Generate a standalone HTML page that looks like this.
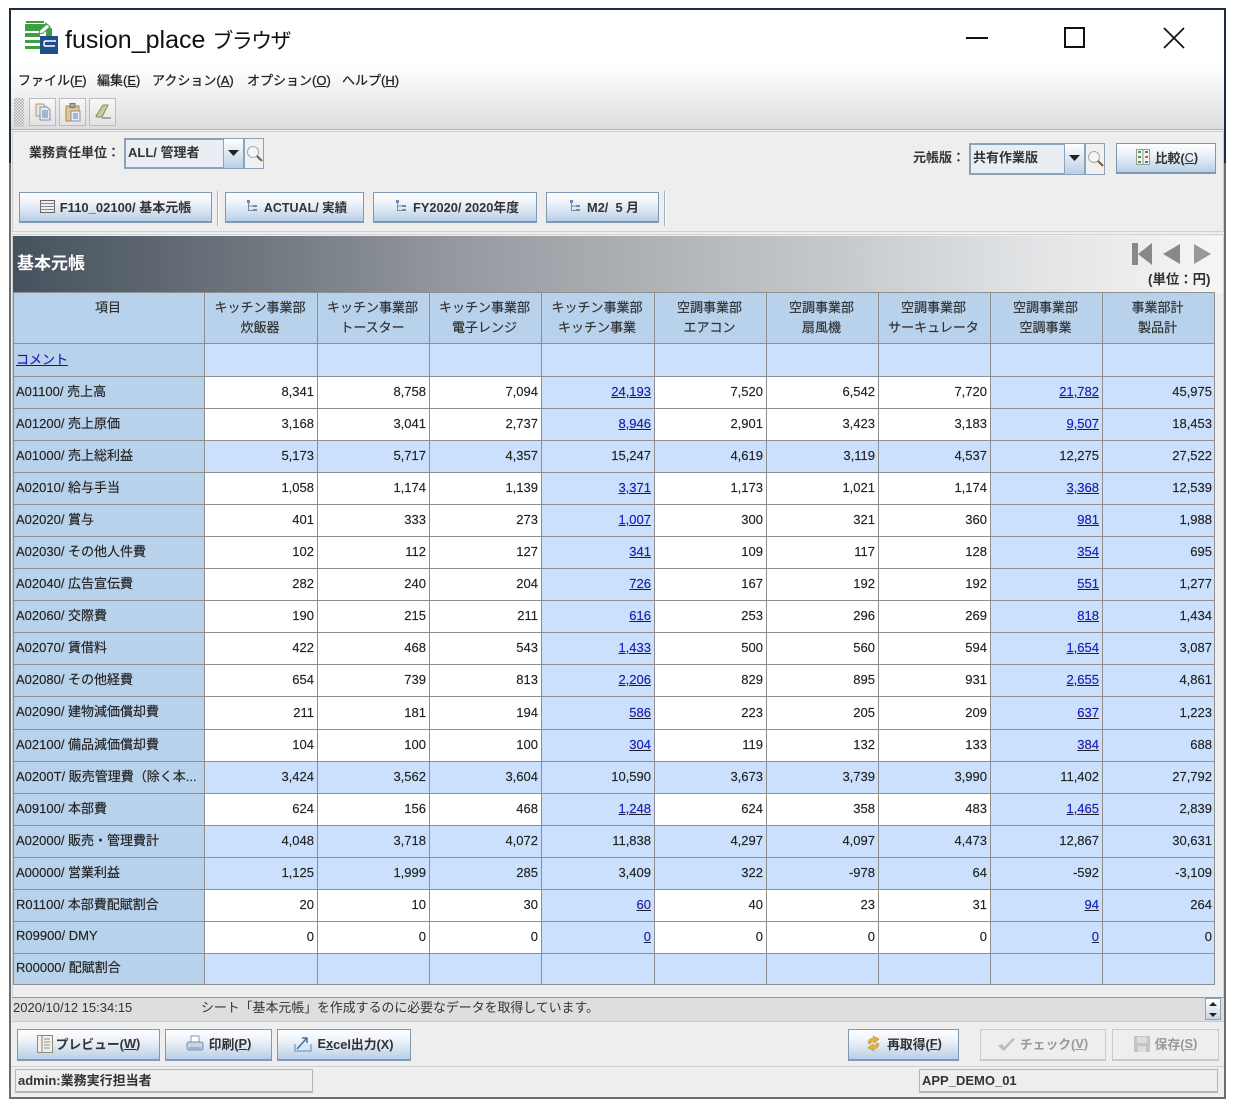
<!DOCTYPE html>
<html lang="ja"><head><meta charset="utf-8"><title>fusion_place ブラウザ</title>
<style>
*{box-sizing:border-box}
html,body{margin:0;padding:0;background:#fff}
body{width:1238px;height:1116px;position:relative;overflow:hidden;font-family:"Liberation Sans","Noto Sans CJK JP",sans-serif;font-size:13px;color:#222}
.a{position:absolute;white-space:nowrap}
.btn{position:absolute;border:1px solid #7f99b3;border-width:1px 1px 2px 1px;background:linear-gradient(#fdfeff 0,#eef3f9 35%,#b9cfe6 100%);display:flex;align-items:center;justify-content:center;font-weight:bold;color:#333;white-space:nowrap;font-size:12.8px;padding-bottom:2px}
.btn svg{margin-right:5px;flex:none}
.dis{border:2px solid #c9c9c9;border-width:1px 1px 2px 1px;background:#eee;color:#999}
.tb{position:absolute;top:98px;width:27px;height:28px;border:1px solid #bcbcbc;background:linear-gradient(#f8f8f8,#e2e2e2);display:flex;align-items:center;justify-content:center}
.sep{position:absolute;width:2px;background:#9db3cc;border-right:1px solid #fff}
.m{position:absolute;top:70px;font-size:13px;color:#222;white-space:nowrap;-webkit-text-stroke:.25px #222}
table{position:absolute;left:13px;top:292px;border-collapse:collapse;table-layout:fixed;width:1202px;-webkit-text-stroke:.15px #222}
td,th{border:1px solid #8e8e8e;font-weight:normal;font-size:13px;overflow:hidden;white-space:nowrap}
td{background:#cae0fd;text-align:right;color:#222;padding:0 3px 2px 2px}
td:last-child{padding-right:2px}
td.w{background:#fff}
th{background:#b8d2ec;text-align:left;padding:0 2px 5px 2px}
tr.h th{text-align:center;vertical-align:top;line-height:20px;padding:5px 3px 0 1px;color:#333}
u{color:#1a1ae0}
.lab{font-weight:bold;color:#333}
</style></head><body>

<!-- window frame -->
<div class="a" style="left:9px;top:8px;width:1217px;height:1091px;background:#eee;border:2px solid #6d6d6d;border-top-color:#1c2c3c"></div>
<div class="a" style="left:9px;top:8px;width:2px;height:155px;background:#1c2c3c"></div>
<div class="a" style="left:1224px;top:8px;width:2px;height:155px;background:#1c2c3c"></div>
<div class="a" style="left:11px;top:10px;width:1213px;height:120px;background:linear-gradient(#fff 0,#fff 48%,#dcdcdc 100%)"></div>

<!-- app icon -->
<svg class="a" style="left:25px;top:21px" width="34" height="34" viewBox="0 0 34 34">
<path d="M0 1H20L27 8V15H15V28H0Z" fill="#fff"/>
<path d="M1 1H19" stroke="#3f9d43" stroke-width="2"/><rect x="0" y="3" width="20" height="7" fill="#3f9d43"/>
<rect x="0" y="12" width="15" height="4" fill="#3f9d43"/><rect x="0" y="19" width="15" height="3" fill="#3f9d43"/><rect x="0" y="25" width="15" height="3" fill="#3f9d43"/>
<path d="M20 1L27 8V15H21V10L20 8Z" fill="#3f9d43"/><path d="M15 9L22 3L25 6L18 12L14 13Z" fill="#fff" stroke="#3f9d43"/>
<rect x="15" y="15" width="18" height="18" fill="#1f4e8c"/>
<path d="M19 25V22Q19 20 21 20H31M19 25H30" fill="none" stroke="#fff" stroke-width="1.4"/>
</svg>
<div class="a" style="left:65px;top:24px;font-size:25px;line-height:32px;color:#111">fusion_place <span style="font-size:21px;letter-spacing:-1.6px">ブラウザ</span></div>

<!-- window controls -->
<div class="a" style="left:966px;top:37px;width:22px;height:2px;background:#111"></div>
<div class="a" style="left:1064px;top:27px;width:21px;height:21px;border:2px solid #111"></div>
<svg class="a" style="left:1163px;top:27px" width="22" height="22"><path d="M1 1L21 21M21 1L1 21" stroke="#111" stroke-width="1.7"/></svg>

<!-- menu -->
<div class="m" style="left:18px">ファイル(<u style="color:inherit">F</u>)</div>
<div class="m" style="left:97px">編集(<u style="color:inherit">E</u>)</div>
<div class="m" style="left:152px">アクション(<u style="color:inherit">A</u>)</div>
<div class="m" style="left:247px">オプション(<u style="color:inherit">O</u>)</div>
<div class="m" style="left:342px">ヘルプ(<u style="color:inherit">H</u>)</div>

<!-- toolbar -->
<div class="a" style="left:14px;top:98px;width:10px;height:29px;background-image:repeating-conic-gradient(#aaa 0 25%,#eee 0 50%);background-size:3px 3px"></div>
<div class="tb" style="left:29px"><svg width="20" height="20" viewBox="0 0 20 20"><path d="M3 2H10L12 4V14H3Z" fill="#eee8d8" stroke="#a9987a"/><path d="M7 5H14L17 8V18H7Z" fill="#e4ecf6" stroke="#7e95b3"/><path d="M9 9H15M9 11H15M9 13H15M9 15H15" stroke="#5b82b0"/></svg></div>
<div class="tb" style="left:59px"><svg width="20" height="20" viewBox="0 0 20 20"><rect x="3" y="4" width="13" height="15" fill="#e7c48c" stroke="#a98a50"/><rect x="7" y="1.500" width="5" height="4" fill="#aaa" stroke="#777"/><path d="M8 9H17V19H8Z" fill="#e8eef8" stroke="#7e95b3"/><path d="M10 12H15M10 14H15M10 16H15" stroke="#5b82b0"/></svg></div>
<div class="tb" style="left:89px"><svg width="20" height="20" viewBox="0 0 20 20"><path d="M3 14L10 3H15L9 15H4Z" fill="#cfc9a0" stroke="#8b8a63"/><path d="M9 16H18" stroke="#666"/></svg></div>
<div class="a" style="left:11px;top:129px;width:1213px;height:1px;background:#b5b5b5"></div>

<!-- filter panel -->
<div class="a" style="left:12px;top:131px;width:1212px;height:101px;background:#eee;border:1px solid #cfcfcf"></div>
<div class="a lab" style="left:29px;top:142px">業務責任単位：</div>
<div class="a" style="left:124px;top:138px;width:100px;height:31px;background:#e9eef4;border:2px solid #8ca2b8;font-weight:bold;color:#333;padding:2px 2px;border-right-width:1px">ALL/ 管理者</div>
<div class="a" style="left:223px;top:138px;width:21px;height:31px;background:linear-gradient(#fff,#b9cfe6);border:1px solid #8ca2b8"></div>
<svg class="a" style="left:228px;top:150px" width="11" height="6"><path d="M0 0H11L5.500 6Z" fill="#222"/></svg>
<div class="a" style="left:244px;top:138px;width:20px;height:31px;background:#f1f1f1;border:1px solid #8ca2b8"></div>
<svg class="a" style="left:246px;top:145px" width="17" height="17"><circle cx="7" cy="7" r="5.500" fill="#f3f6fa" stroke="#a8a8a8"/><path d="M11 11L16 16" stroke="#7a5a40" stroke-width="2"/></svg>

<div class="a lab" style="left:913px;top:147px">元帳版：</div>
<div class="a" style="left:969px;top:143px;width:96px;height:32px;background:#e9eef4;border:2px solid #8ca2b8;font-weight:bold;color:#333;padding:2px 2px;border-right-width:1px">共有作業版</div>
<div class="a" style="left:1064px;top:143px;width:21px;height:32px;background:linear-gradient(#fff,#b9cfe6);border:1px solid #8ca2b8"></div>
<svg class="a" style="left:1069px;top:155px" width="11" height="6"><path d="M0 0H11L5.500 6Z" fill="#222"/></svg>
<div class="a" style="left:1085px;top:143px;width:20px;height:32px;background:#f1f1f1;border:1px solid #8ca2b8"></div>
<svg class="a" style="left:1087px;top:150px" width="17" height="17"><circle cx="7" cy="7" r="5.500" fill="#f3f6fa" stroke="#a8a8a8"/><path d="M11 11L16 16" stroke="#7a5a40" stroke-width="2"/></svg>
<div class="btn" style="left:1116px;top:143px;width:100px;height:31px;padding-left:2px"><svg width="14" height="16" viewBox="0 0 14 16"><rect x=".5" y=".5" width="13" height="15" fill="#f4f4e8" stroke="#999"/><path d="M7 0V16" stroke="#999"/><path d="M2 3H5M2 8H5M2 13H5" stroke="#3a9a5a" stroke-width="2"/><path d="M9 3H12M9 13H12" stroke="#3f77c0" stroke-width="2"/><path d="M9 8H12" stroke="#d9534f" stroke-width="2"/></svg>比較(<u style="color:inherit;font-weight:normal">C</u>)</div>

<div class="btn" style="left:19px;top:192px;width:193px;height:31px;font-size:13px"><svg width="15" height="13" viewBox="0 0 15 13"><rect x=".5" y=".5" width="14" height="12" fill="#eee" stroke="#666"/><path d="M0 3.500H15M0 6.500H15M0 9.500H15" stroke="#888"/></svg>F110_02100/ 基本元帳</div>
<div class="sep" style="left:217px;top:191px;height:35px"></div>
<div class="btn" style="left:225px;top:192px;width:139px;height:31px;font-size:12.5px;padding-left:4px"><svg style="margin-right:6px" width="12" height="12" viewBox="0 0 12 12"><path d="M2.500 2V10.500H7M2.500 6H7" fill="none" stroke="#6c8bb0"/><rect x="1" y="0" width="3" height="3" fill="#6c8bb0"/><rect x="7" y="5" width="4" height="2" fill="#6c8bb0"/><rect x="7" y="9" width="4" height="2" fill="#6c8bb0"/></svg>ACTUAL/ 実績</div>
<div class="btn" style="left:373px;top:192px;width:164px;height:31px;padding-left:4px"><svg style="margin-right:6px" width="12" height="12" viewBox="0 0 12 12"><path d="M2.500 2V10.500H7M2.500 6H7" fill="none" stroke="#6c8bb0"/><rect x="1" y="0" width="3" height="3" fill="#6c8bb0"/><rect x="7" y="5" width="4" height="2" fill="#6c8bb0"/><rect x="7" y="9" width="4" height="2" fill="#6c8bb0"/></svg>FY2020/ 2020年度</div>
<div class="btn" style="left:546px;top:192px;width:113px;height:31px;padding-left:3px"><svg style="margin-right:6px" width="12" height="12" viewBox="0 0 12 12"><path d="M2.500 2V10.500H7M2.500 6H7" fill="none" stroke="#6c8bb0"/><rect x="1" y="0" width="3" height="3" fill="#6c8bb0"/><rect x="7" y="5" width="4" height="2" fill="#6c8bb0"/><rect x="7" y="9" width="4" height="2" fill="#6c8bb0"/></svg>M2/ &nbsp;5 月</div>
<div class="sep" style="left:664px;top:191px;height:35px"></div>

<!-- sheet header -->
<div class="a" style="left:12px;top:234px;width:1212px;height:764px;background:#eee;border:1px solid #d2d2d2"></div>
<div class="a" style="left:13px;top:236px;width:1210px;height:57px;background:linear-gradient(90deg,#46525e 0,#6f767e 20%,#989ca2 38%,#c6c9cc 68%,#e2e4e6 85%,#f6f6f6 100%)"></div>
<div class="a" style="left:17px;top:252px;font-size:17px;font-weight:bold;color:#fff;line-height:24px">基本元帳</div>
<svg class="a" style="left:1131px;top:242px" width="82" height="24"><path d="M1 1H7V23H1ZM21 1V23L7 12Z" fill="#888"/><path d="M49 2V22L32 12Z" fill="#888"/><path d="M63 2V22L80 12Z" fill="#999"/></svg>
<div class="a lab" style="left:1148px;top:268px;font-size:13.4px">(単位：円)</div>

<!-- table -->
<table>
<colgroup><col style="width:191px"><col style="width:113px"><col style="width:112px"><col style="width:112px"><col style="width:113px"><col style="width:112px"><col style="width:112px"><col style="width:112px"><col style="width:112px"><col style="width:112px"></colgroup>
<tr class="h" style="height:51px"><th>項目</th><th>キッチン事業部<br>炊飯器</th><th>キッチン事業部<br>トースター</th><th>キッチン事業部<br>電子レンジ</th><th>キッチン事業部<br>キッチン事業</th><th>空調事業部<br>エアコン</th><th>空調事業部<br>扇風機</th><th>空調事業部<br>サーキュレータ</th><th>空調事業部<br>空調事業</th><th>事業部計<br>製品計</th></tr>
<tr style="height:33px"><th style="padding-bottom:3px"><u>コメント</u></th><td></td><td></td><td></td><td></td><td></td><td></td><td></td><td></td><td></td></tr>
<tr style="height:32px"><th>A01100/ 売上高</th><td class="w">8,341</td><td class="w">8,758</td><td class="w">7,094</td><td><u>24,193</u></td><td class="w">7,520</td><td class="w">6,542</td><td class="w">7,720</td><td><u>21,782</u></td><td>45,975</td></tr>
<tr style="height:32px"><th>A01200/ 売上原価</th><td class="w">3,168</td><td class="w">3,041</td><td class="w">2,737</td><td><u>8,946</u></td><td class="w">2,901</td><td class="w">3,423</td><td class="w">3,183</td><td><u>9,507</u></td><td>18,453</td></tr>
<tr style="height:32px"><th>A01000/ 売上総利益</th><td>5,173</td><td>5,717</td><td>4,357</td><td>15,247</td><td>4,619</td><td>3,119</td><td>4,537</td><td>12,275</td><td>27,522</td></tr>
<tr style="height:32px"><th>A02010/ 給与手当</th><td class="w">1,058</td><td class="w">1,174</td><td class="w">1,139</td><td><u>3,371</u></td><td class="w">1,173</td><td class="w">1,021</td><td class="w">1,174</td><td><u>3,368</u></td><td>12,539</td></tr>
<tr style="height:32px"><th>A02020/ 賞与</th><td class="w">401</td><td class="w">333</td><td class="w">273</td><td><u>1,007</u></td><td class="w">300</td><td class="w">321</td><td class="w">360</td><td><u>981</u></td><td>1,988</td></tr>
<tr style="height:32px"><th>A02030/ その他人件費</th><td class="w">102</td><td class="w">112</td><td class="w">127</td><td><u>341</u></td><td class="w">109</td><td class="w">117</td><td class="w">128</td><td><u>354</u></td><td>695</td></tr>
<tr style="height:32px"><th>A02040/ 広告宣伝費</th><td class="w">282</td><td class="w">240</td><td class="w">204</td><td><u>726</u></td><td class="w">167</td><td class="w">192</td><td class="w">192</td><td><u>551</u></td><td>1,277</td></tr>
<tr style="height:32px"><th>A02060/ 交際費</th><td class="w">190</td><td class="w">215</td><td class="w">211</td><td><u>616</u></td><td class="w">253</td><td class="w">296</td><td class="w">269</td><td><u>818</u></td><td>1,434</td></tr>
<tr style="height:32px"><th>A02070/ 賃借料</th><td class="w">422</td><td class="w">468</td><td class="w">543</td><td><u>1,433</u></td><td class="w">500</td><td class="w">560</td><td class="w">594</td><td><u>1,654</u></td><td>3,087</td></tr>
<tr style="height:32px"><th>A02080/ その他経費</th><td class="w">654</td><td class="w">739</td><td class="w">813</td><td><u>2,206</u></td><td class="w">829</td><td class="w">895</td><td class="w">931</td><td><u>2,655</u></td><td>4,861</td></tr>
<tr style="height:33px"><th>A02090/ 建物減価償却費</th><td class="w">211</td><td class="w">181</td><td class="w">194</td><td><u>586</u></td><td class="w">223</td><td class="w">205</td><td class="w">209</td><td><u>637</u></td><td>1,223</td></tr>
<tr style="height:32px"><th>A02100/ 備品減価償却費</th><td class="w">104</td><td class="w">100</td><td class="w">100</td><td><u>304</u></td><td class="w">119</td><td class="w">132</td><td class="w">133</td><td><u>384</u></td><td>688</td></tr>
<tr style="height:32px"><th>A0200T/ 販売管理費（除く本...</th><td>3,424</td><td>3,562</td><td>3,604</td><td>10,590</td><td>3,673</td><td>3,739</td><td>3,990</td><td>11,402</td><td>27,792</td></tr>
<tr style="height:32px"><th>A09100/ 本部費</th><td class="w">624</td><td class="w">156</td><td class="w">468</td><td><u>1,248</u></td><td class="w">624</td><td class="w">358</td><td class="w">483</td><td><u>1,465</u></td><td>2,839</td></tr>
<tr style="height:32px"><th>A02000/ 販売・管理費計</th><td>4,048</td><td>3,718</td><td>4,072</td><td>11,838</td><td>4,297</td><td>4,097</td><td>4,473</td><td>12,867</td><td>30,631</td></tr>
<tr style="height:32px"><th>A00000/ 営業利益</th><td>1,125</td><td>1,999</td><td>285</td><td>3,409</td><td>322</td><td>-978</td><td>64</td><td>-592</td><td>-3,109</td></tr>
<tr style="height:32px"><th>R01100/ 本部費配賦割合</th><td class="w">20</td><td class="w">10</td><td class="w">30</td><td><u>60</u></td><td class="w">40</td><td class="w">23</td><td class="w">31</td><td><u>94</u></td><td>264</td></tr>
<tr style="height:32px"><th>R09900/ DMY</th><td class="w">0</td><td class="w">0</td><td class="w">0</td><td><u>0</u></td><td class="w">0</td><td class="w">0</td><td class="w">0</td><td><u>0</u></td><td>0</td></tr>
<tr style="height:31px"><th>R00000/ 配賦割合</th><td></td><td></td><td></td><td></td><td></td><td></td><td></td><td></td><td></td></tr>
</table>

<!-- message strip -->
<div class="a" style="left:12px;top:997px;width:1212px;height:25px;background:#dedede;border-top:1px solid #8e9aa6;border-bottom:1px solid #c8c8c8"></div>
<div class="a" style="left:13px;top:1000px;color:#333">2020/10/12 15:34:15</div>
<div class="a" style="left:201px;top:997px;color:#333;font-size:12.9px">シート「基本元帳」を作成するのに必要なデータを取得しています。</div>
<div class="a" style="left:1205px;top:998px;width:16px;height:22px;background:linear-gradient(#fff,#c5d6e8);border:1px solid #8ca2b8"></div>
<svg class="a" style="left:1208px;top:1002px" width="10" height="15"><path d="M1 4H9L5 0ZM1 11H9L5 15Z" fill="#222"/></svg>

<!-- bottom buttons -->
<div class="btn" style="left:17px;top:1029px;width:143px;height:32px"><svg style="margin-right:3px" width="16" height="18" viewBox="0 0 16 18"><rect x=".5" y=".5" width="15" height="17" fill="#f2f0e6" stroke="#8b8b7a"/><path d="M5 0V18" stroke="#8b8b7a"/><path d="M7 4H13M7 7H13M7 10H13M7 13H13" stroke="#7f97b3"/></svg>プレビュー(<u style="color:inherit">W</u>)</div>
<div class="btn" style="left:165px;top:1029px;width:107px;height:32px"><svg width="18" height="17" viewBox="0 0 18 17"><rect x="5" y="1" width="8" height="8" fill="#fff" stroke="#8a9ab0"/><rect x="1" y="7" width="16" height="8" rx="2" fill="#c6d5e8" stroke="#6f8db3"/><path d="M3 13H15" stroke="#6f8db3"/></svg>印刷(<u style="color:inherit">P</u>)</div>
<div class="btn" style="left:277px;top:1029px;width:134px;height:32px"><svg width="18" height="16" viewBox="0 0 18 16"><path d="M1 8V15H17V8" fill="#dbe6f3" stroke="#5f86b6"/><path d="M3 13L12 3M8 2H13V7" fill="none" stroke="#3f6fa8" stroke-width="1.500"/></svg>E<u style="color:inherit">x</u>cel出力(X)</div>
<div class="btn" style="left:848px;top:1029px;width:111px;height:32px"><svg width="17" height="17" viewBox="0 0 17 17"><path d="M3 8Q4 3 9 3L8 1L14 4L9 8V6Q6 6 5 9Z" fill="#eab53e" stroke="#b5842a" stroke-width=".6"/><path d="M14 9Q13 14 8 14L9 16L3 13L8 9V11Q11 11 12 8Z" fill="#eab53e" stroke="#b5842a" stroke-width=".6"/></svg>再取得(<u style="color:inherit">F</u>)</div>
<div class="btn dis" style="left:980px;top:1029px;width:126px;height:32px"><svg width="17" height="14" viewBox="0 0 17 14"><path d="M0 9L4 7L6 10L15 1L17 2L6 14Z" fill="#bdbdbd"/></svg>チェック(<u style="color:inherit">V</u>)</div>
<div class="btn dis" style="left:1112px;top:1029px;width:107px;height:32px"><svg width="16" height="16" viewBox="0 0 16 16"><rect width="16" height="16" fill="#c4c4c4"/><rect x="3" y="1" width="10" height="6" fill="#ddd"/><rect x="4" y="10" width="8" height="6" fill="#ddd"/></svg>保存(<u style="color:inherit">S</u>)</div>

<!-- status -->
<div class="a" style="left:11px;top:1066px;width:1213px;height:1px;background:#d0d0d0"></div>
<div class="a" style="left:15px;top:1069px;width:298px;height:24px;border:1px solid #b5b5b5;border-width:1px 1px 2px 1px;background:#eee;padding:0 2px;font-weight:bold;color:#333">admin:業務実行担当者</div>
<div class="a" style="left:919px;top:1069px;width:299px;height:24px;border:1px solid #b5b5b5;border-width:1px 1px 2px 1px;background:#eee;padding:3px 2px;font-weight:bold;color:#333">APP_DEMO_01</div>
</body></html>
